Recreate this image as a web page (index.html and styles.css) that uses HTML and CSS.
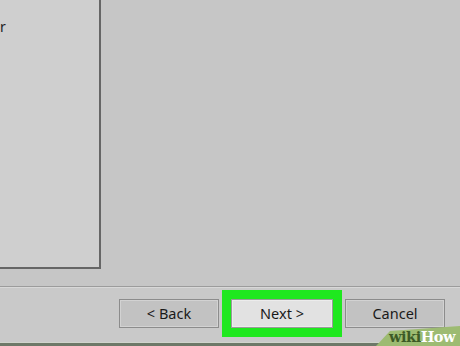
FILE: index.html
```html
<!DOCTYPE html>
<html>
<head>
<meta charset="utf-8">
<link rel="stylesheet" href="styles.css">
</head>
<body>
<div class="window">
  <div class="content">
    <div class="panel"><span class="panel-text">r</span></div>
  </div>
  <div class="footer">
    <button class="btn">&lt; Back</button>
    <button class="btn btn-next">Next &gt;</button>
    <button class="btn">Cancel</button>
  </div>
  <div class="bottom-edge"></div>
  <div class="wh-badge">
    <svg class="wh-bg" width="92" height="20" viewBox="0 0 92 20"><polygon points="8,20 92,20 92,0 22,5" fill="#9dbb72"/></svg>
    <span class="wh-text"><span class="wh-wiki">wiki</span><span class="wh-how">How</span></span>
  </div>
</div>
</body>
</html>
```

FILE: styles.css
```css
html, body {
  margin: 0;
  padding: 0;
}
body {
  width: 460px;
  height: 346px;
  overflow: hidden;
  background: #c6c6c6;
  font-family: "Noto Sans", "Open Sans", sans-serif;
}
.window {
  position: relative;
  width: 460px;
  height: 346px;
  display: flex;
  flex-direction: column;
  background: #c6c6c6;
}
.content {
  height: 286px;
  display: flex;
  align-items: flex-start;
}
.panel {
  width: 99px;
  background: #cfcfcf;
  border-right: 2px solid #666;
  border-bottom: 2px solid #666;
  padding-top: 19px;
  box-sizing: content-box;
  height: 248px;
}
.panel-text {
  display: block;
  margin-left: 0;
  font-size: 14px;
  color: #222;
  line-height: 16px;
}
.footer {
  flex: 1;
  border-top: 1px solid #9c9c9c;
  box-shadow: inset 0 1px 0 #d8d8d8;
  background: #c9c9c9;
  display: flex;
  justify-content: flex-end;
  align-items: flex-start;
  gap: 12px;
  padding: 12px 15px 0 0;
}
.btn {
  width: 100px;
  height: 29px;
  margin: 0;
  padding: 0;
  background: #c2c2c2;
  border: 1px solid #8c8c8c;
  box-shadow: inset 0 0 0 1px #d2d2d2;
  font-family: "Noto Sans", "Open Sans", sans-serif;
  font-size: 14.5px;
  color: #1a1a1a;
  line-height: 27px;
}
.btn-next {
  width: 102px;
  background: #e2e2e2;
  border-color: #9a9a9a;
  box-shadow: inset 0 0 0 1px #ececec;
  outline: 9px solid #1fe81f;
}
.bottom-edge {
  height: 3px;
  background: #6d7868;
  border-top: 1px solid #d0d4cc;
}
.wh-badge {
  position: absolute;
  right: 0;
  bottom: 0;
  width: 92px;
  height: 20px;
}
.wh-bg {
  position: absolute;
  left: 0;
  top: 0;
}
.wh-text {
  position: absolute;
  right: 5px;
  bottom: 1px;
  font-family: "DejaVu Serif", "Liberation Serif", serif;
  font-weight: bold;
  font-size: 14.5px;
  line-height: 17px;
  letter-spacing: -0.5px;
  white-space: nowrap;
}
.wh-wiki {
  color: #3c5a26;
}
.wh-how {
  color: #ffffff;
}
```
